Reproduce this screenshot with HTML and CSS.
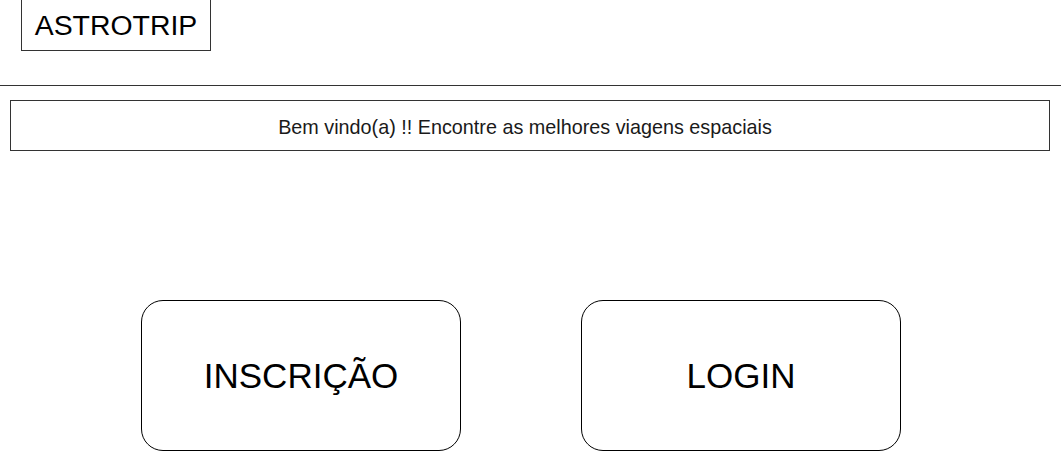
FILE: index.html
```html
<!DOCTYPE html>
<html lang="pt">
<head>
<meta charset="utf-8">
<title>ASTROTRIP</title>
<link rel="stylesheet" href="styles.css">
</head>
<body>
<header class="header">
  <div class="logo">ASTROTRIP</div>
</header>
<div class="rule"></div>
<div class="banner">Bem vindo(a) !! Encontre as melhores viagens espaciais</div>
<main class="actions">
  <a class="btn" href="#">INSCRIÇÃO</a>
  <a class="btn" href="#">LOGIN</a>
</main>
</body>
</html>
```
FILE: styles.css
```css
html, body {
  margin: 0;
  padding: 0;
  background: #fff;
}
body {
  width: 1061px;
  height: 452px;
  overflow: hidden;
  font-family: "Liberation Sans", Arial, sans-serif;
  color: #000;
}
.header {
  display: flex;
  padding-left: 21px;
}
.logo {
  box-sizing: border-box;
  width: 190px;
  height: 51px;
  border: 1px solid #333;
  border-top: none;
  display: flex;
  align-items: center;
  justify-content: center;
  font-size: 28.4px;
  padding-top: 1px;
}
.rule {
  margin-top: 34px;
  height: 0;
  border-top: 1px solid #333;
}
.banner {
  box-sizing: border-box;
  margin: 14px 11px 0 10px;
  height: 51px;
  border: 1px solid #333;
  display: flex;
  align-items: center;
  justify-content: center;
  font-size: 19.8px;
  padding-top: 4px;
  padding-right: 10px;
  color: #1a1a1a;
}
.actions {
  display: flex;
  gap: 120px;
  padding-left: 141px;
  margin-top: 149px;
}
.btn {
  box-sizing: border-box;
  width: 320px;
  height: 151px;
  border: 1px solid #000;
  border-radius: 22px;
  display: flex;
  align-items: center;
  justify-content: center;
  font-size: 35px;
  color: #000;
  text-decoration: none;
}
```
